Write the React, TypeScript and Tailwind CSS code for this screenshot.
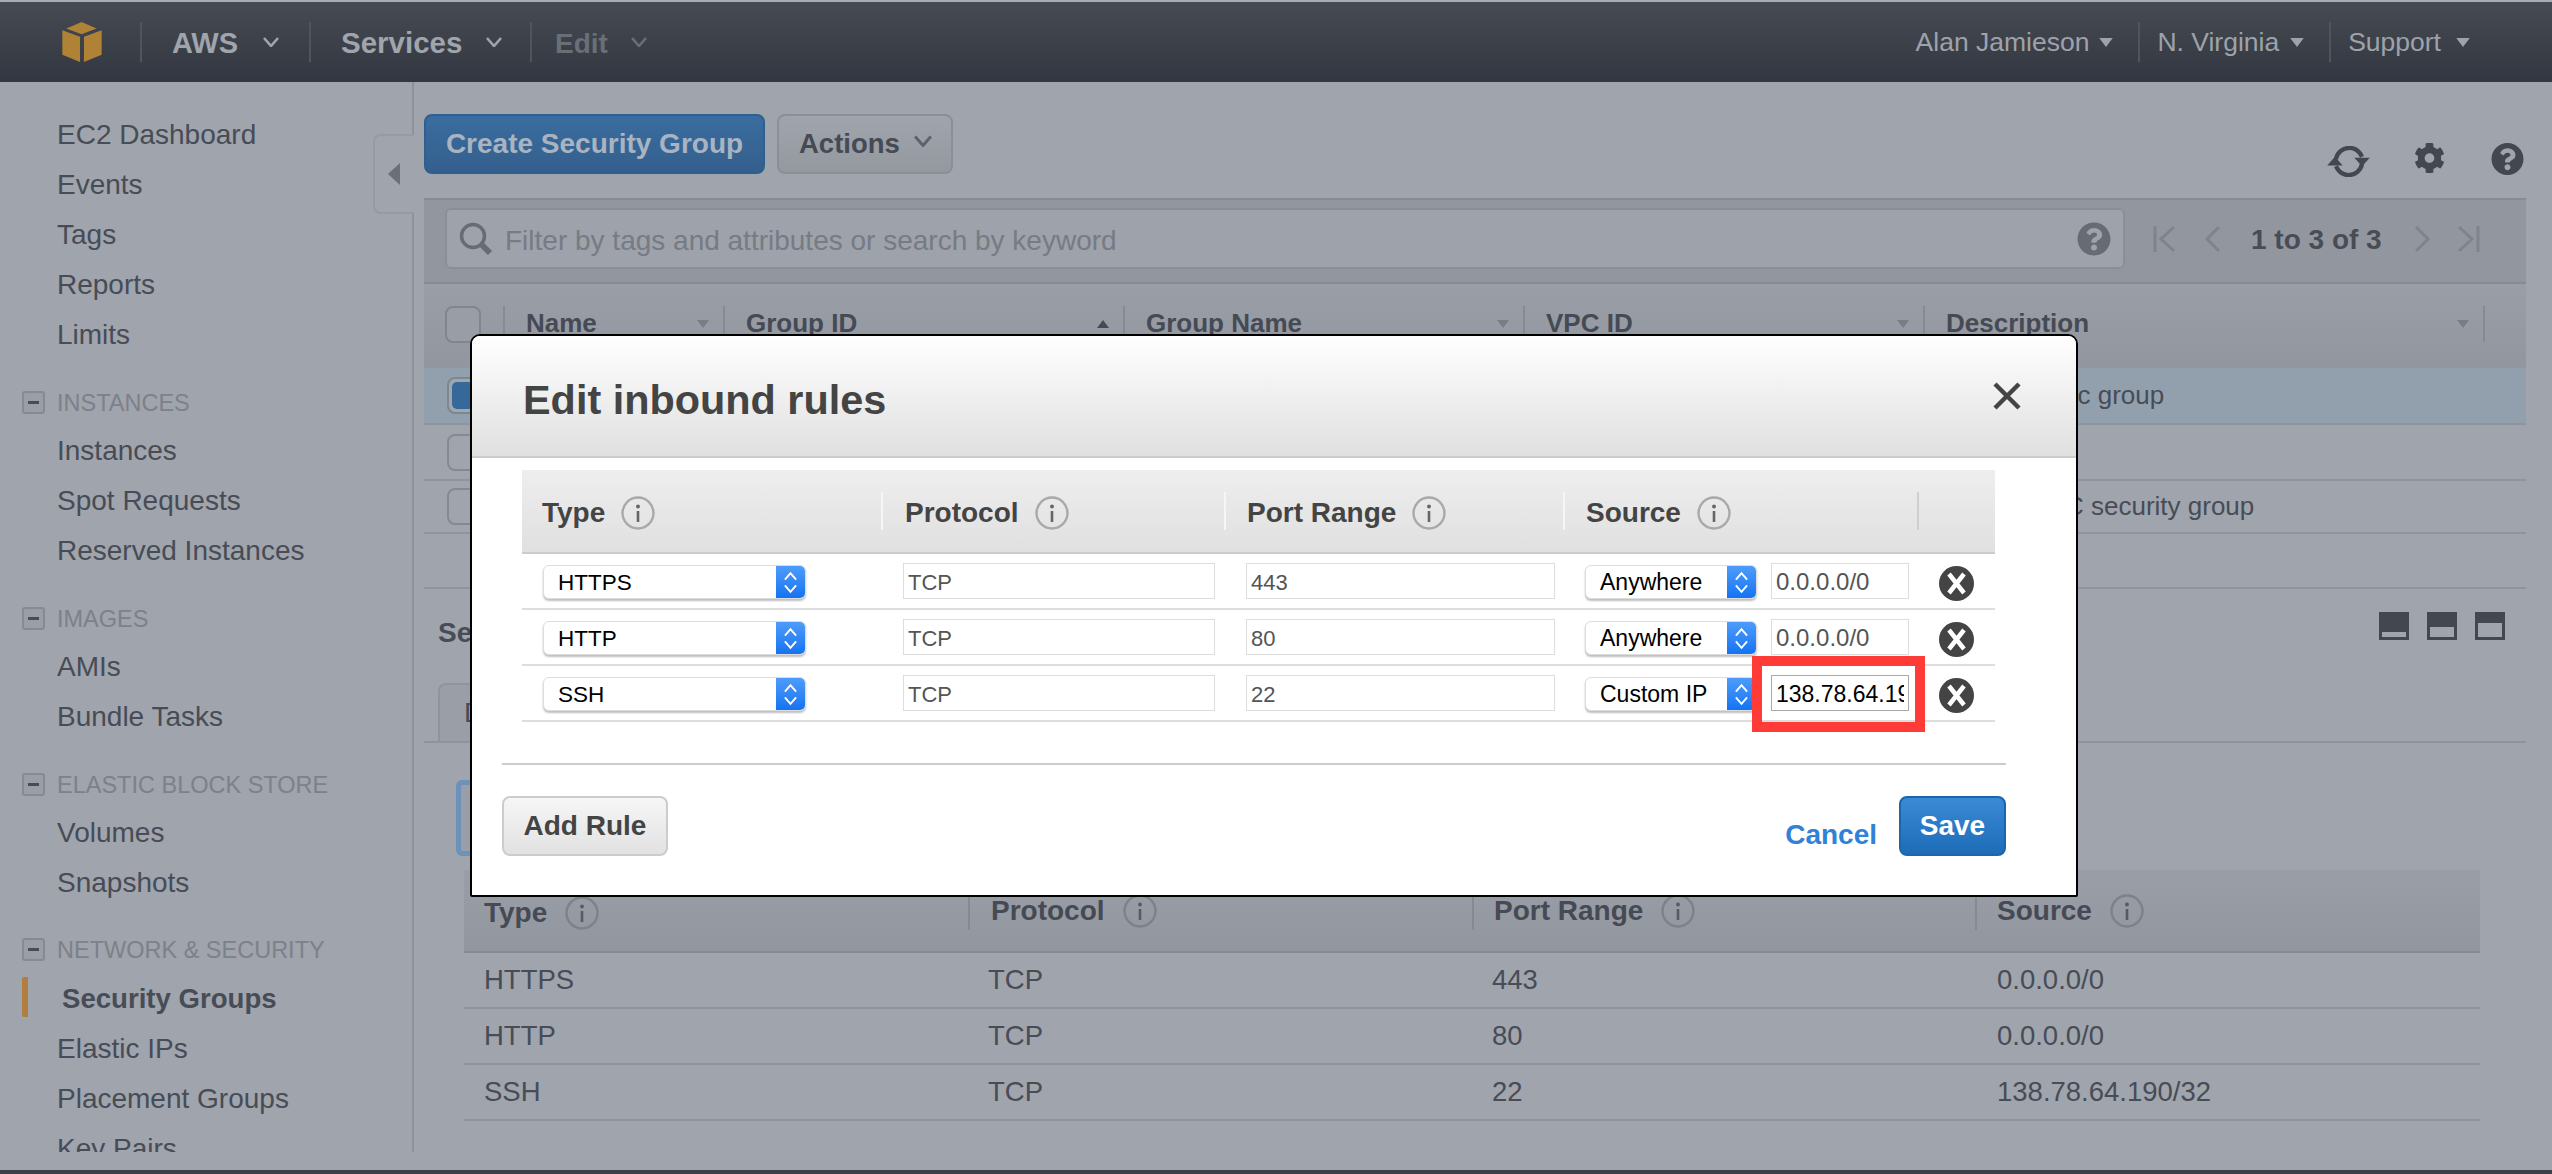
import { ReactNode } from 'react';
import { FaCog, FaQuestionCircle } from 'react-icons/fa';

function Chevron({ className }: { className: string }) {
    return (
        <svg viewBox="0 0 16 10" className={className} fill="none" stroke="currentColor" strokeWidth="2.6">
            <path d="M1 1l7 8 7-8" />
        </svg>
    );
}

function SmallCaret({ up, className }: { up?: boolean; className: string }) {
    return (
        <svg viewBox="0 0 12 8" className={className} fill="currentColor">
            <path d={up ? 'M6 0l6 8H0z' : 'M0 0h12L6 8z'} />
        </svg>
    );
}

function InfoIcon({ dim }: { dim?: boolean }) {
    return (
        <svg viewBox="0 0 34 34" className="w-[34px] h-[34px] shrink-0" fill="none">
            <circle cx="17" cy="17" r="15.5" stroke={dim ? '#7d828a' : '#a9a9a9'} strokeWidth="2.4" />
            <circle cx="17" cy="10.5" r="1.9" fill={dim ? '#555a63' : '#666666'} />
            <path d="M17 15v11" stroke={dim ? '#555a63' : '#666666'} strokeWidth="2.6" />
        </svg>
    );
}

function RemoveIcon() {
    return (
        <svg viewBox="0 0 35 35" className="w-[35px] h-[35px] mt-[3px]" fill="none">
            <circle cx="17.5" cy="17.5" r="17.5" fill="#444444" />
            <path d="M10 8l15 19M25 8L10 27" stroke="#ffffff" strokeWidth="4.5" />
        </svg>
    );
}

function Stepper() {
    return (
        <div className="w-[29px] h-full bg-gradient-to-b from-[#4d9cfa] to-[#1273f2] flex items-center justify-center shrink-0">
            <svg viewBox="0 0 16 26" className="w-[15px] h-[25px]" fill="none" stroke="#ffffff" strokeWidth="2">
                <path d="M2 10l6-7 6 7M2 16l6 7 6-7" />
            </svg>
        </div>
    );
}

function SelectBox({ value, className }: { value: string; className: string }) {
    return (
        <div className={`h-[34px] mt-[2px] bg-white border border-[#dddddd] rounded-[6px] shadow-[0_2px_2px_rgba(0,0,0,0.25)] flex items-center justify-between overflow-hidden text-black ${className}`}>
            <span className="pl-[14px] mt-[1px]">{value}</span>
            <Stepper />
        </div>
    );
}

function TextBox({ value, className }: { value: string; className: string }) {
    return (
        <div className={`h-[36px] bg-white border px-[4px] pt-[2px] flex items-center ${className}`}>
            <div className="overflow-hidden whitespace-nowrap w-full">{value}</div>
        </div>
    );
}

function SideItem({ children }: { children: ReactNode }) {
    return <div className="h-[50px] pl-[57px] pt-[3px] flex items-center text-[28px] text-[#474c56]">{children}</div>;
}

function SideGroup({ title, className }: { title: string; className: string }) {
    return (
        <div className={`h-[44px] pl-[22px] flex items-center ${className}`}>
            <div className="w-[23px] h-[23px] border-2 border-[#868b93] rounded-[3px] bg-[#9a9ea6] flex items-center justify-center mr-[12px]">
                <div className="w-[11px] h-[3px] bg-[#474c56]"></div>
            </div>
            <span className="text-[23.5px] text-[#7c818a] mt-[4px]">{title}</span>
        </div>
    );
}

function GridHead({ label, caret, className }: { label: string; caret?: 'up' | 'down'; className: string }) {
    return (
        <div className={`h-[36px] border-l-2 border-[#868b93] pl-[21px] pr-[14px] flex items-center justify-between ${className}`}>
            <span className="font-bold text-[26px] text-[#454a54] pb-[2px]">{label}</span>
            {caret && <SmallCaret up={caret === 'up'} className={`w-[12px] h-[8px] ${caret === 'up' ? 'text-[#454a54]' : 'text-[#787d86]'}`} />}
        </div>
    );
}

function RuleHead({ label, className }: { label: string; className: string }) {
    return (
        <div className={`h-[38px] pt-[3px] flex items-center ${className}`}>
            <span className="font-bold text-[28px] text-[#444444] mr-[16px]">{label}</span>
            <InfoIcon />
        </div>
    );
}

function RuleRow({ type, port, source, cidr }: { type: string; port: string; source: string; cidr: string }) {
    const custom = source === 'Custom IP';
    return (
        <div className="h-[56px] border-b-2 border-[#dddddd] pt-[9px] flex items-start">
            <div className="w-[359px] pl-[21px]">
                <SelectBox value={type} className="w-[263px] text-[22.5px]" />
            </div>
            <div className="w-[343px] pl-[22px]">
                <TextBox value="TCP" className="w-[312px] border-[#dddddd] text-[22px] text-[#555555]" />
            </div>
            <div className="w-[339px] pl-[22px]">
                <TextBox value={port} className="w-[309px] border-[#dddddd] text-[22px] text-[#555555]" />
            </div>
            <div className="w-[354px] pl-[22px] flex">
                <SelectBox value={source} className="w-[172px] mr-[14px] text-[23px]" />
                {custom ? (
                    <TextBox value={cidr} className="w-[138px] border-[#aaaaaa] text-[23px] text-black" />
                ) : (
                    <TextBox value={cidr} className="w-[138px] border-[#dddddd] text-[24px] text-[#555555]" />
                )}
            </div>
            <div className="w-[78px] pl-[22px]">
                <RemoveIcon />
            </div>
        </div>
    );
}

function DetailRow({ type, port, source }: { type: string; port: string; source: string }) {
    return (
        <div className="h-[56px] border-b-2 border-[#8f949c] flex items-center text-[27.5px] text-[#474c56]">
            <div className="w-[524px] pl-[20px]">{type}</div>
            <div className="w-[504px]">TCP</div>
            <div className="w-[505px]">{port}</div>
            <div>{source}</div>
        </div>
    );
}

const sideTop = ['EC2 Dashboard', 'Events', 'Tags', 'Reports', 'Limits'];

export default function App() {
    return (
        <div className="relative w-[2552px] h-[1174px] overflow-hidden bg-[#a0a4ac] font-['Liberation_Sans',Arial,sans-serif]">
            <div className="h-[2px] bg-[#a9abaf]"></div>

            {/* top bar */}
            <header className="h-[80px] bg-gradient-to-b from-[#464a52] to-[#333741] flex items-center">
                <div className="w-[140px] pl-[62px]">
                    <svg viewBox="0 0 120 122" className="w-[40px] h-[40px]" fill="#b08236">
                        <path d="M59 0L12 20l47 17 45-17z" />
                        <path d="M0 25l54 20v77L0 100z" />
                        <path d="M66 45l54-20v75l-54 22z" />
                    </svg>
                </div>
                <div className="h-[40px] w-[169px] border-l-2 border-[#50545c] pl-[30px] flex items-center">
                    <span className="font-bold text-[29px] text-[#a0a4ac] mt-[3px]">AWS</span>
                    <Chevron className="w-[16px] h-[10px] ml-[25px] text-[#a0a4ac]" />
                </div>
                <div className="h-[40px] w-[221px] border-l-2 border-[#50545c] pl-[30px] flex items-center">
                    <span className="font-bold text-[29.5px] text-[#a0a4ac] mt-[3px]">Services</span>
                    <Chevron className="w-[16px] h-[10px] ml-[24px] text-[#a0a4ac]" />
                </div>
                <div className="h-[40px] border-l-2 border-[#50545c] pl-[23px] flex items-center">
                    <span className="font-bold text-[28px] text-[#6a6e76] mt-[3px]">Edit</span>
                    <Chevron className="w-[16px] h-[10px] ml-[23px] text-[#6a6e76]" />
                </div>

                <div className="ml-auto flex items-center text-[26.5px] text-[#9ea2aa] pr-[82px]">
                    <span className="mt-[2px]">Alan Jamieson</span>
                    <SmallCaret className="w-[14px] h-[9px] ml-[10px] mr-[25px]" />
                    <div className="h-[40px] border-l-2 border-[#50545c] pl-[17px] flex items-center">
                        <span className="mt-[2px]">N. Virginia</span>
                        <SmallCaret className="w-[14px] h-[9px] ml-[11px] mr-[25px]" />
                    </div>
                    <div className="h-[40px] border-l-2 border-[#50545c] pl-[17px] flex items-center">
                        <span className="mt-[2px]">Support</span>
                        <SmallCaret className="w-[14px] h-[9px] ml-[15px]" />
                    </div>
                </div>
            </header>

            <div className="h-[1088px] flex items-start">
                {/* side nav */}
                <aside className="relative w-[414px] h-[1070px] shrink-0 border-r-2 border-[#8e939b]">
                    <div className="h-full overflow-hidden pt-[26px]">
                        {sideTop.map((item) => (
                            <SideItem key={item}>{item}</SideItem>
                        ))}
                        <SideGroup title="INSTANCES" className="mt-[22px]" />
                        <SideItem>Instances</SideItem>
                        <SideItem>Spot Requests</SideItem>
                        <SideItem>Reserved Instances</SideItem>
                        <SideGroup title="IMAGES" className="mt-[22px]" />
                        <SideItem>AMIs</SideItem>
                        <SideItem>Bundle Tasks</SideItem>
                        <SideGroup title="ELASTIC BLOCK STORE" className="mt-[22px]" />
                        <SideItem>Volumes</SideItem>
                        <SideItem>Snapshots</SideItem>
                        <SideGroup title="NETWORK & SECURITY" className="mt-[21px]" />
                        <div className="h-[50px] mt-[1px] flex items-center">
                            <div className="ml-[22px] w-[6px] h-[40px] bg-[#b07f3f] rounded-l-[2px]"></div>
                            <span className="ml-[34px] mt-[3px] font-bold text-[27.6px] text-[#474c56]">Security Groups</span>
                        </div>
                        <SideItem>Elastic IPs</SideItem>
                        <SideItem>Placement Groups</SideItem>
                        <SideItem>Key Pairs</SideItem>
                    </div>
                    <div className="absolute left-[373px] top-[52px] w-[41px] h-[80px] bg-[#a0a4ac] border-2 border-r-0 border-[#969aa2] rounded-l-[8px] flex items-center pl-[13px]">
                        <svg viewBox="0 0 12 22" className="w-[12px] h-[22px]" fill="#6a6f78">
                            <path d="M12 0v22L0 11z" />
                        </svg>
                    </div>
                </aside>

                {/* main column */}
                <main className="ml-[10px] w-[2102px] pt-[32px]">
                    <div className="h-[60px] flex">
                        <button className="w-[341px] h-[60px] rounded-[8px] border-2 border-[#2f5f8e] bg-gradient-to-b from-[#3a6d9f] to-[#345f8d] font-bold text-[28px] text-[#a9b4c2]">
                            Create Security Group
                        </button>
                        <button className="ml-[12px] w-[176px] h-[60px] rounded-[8px] border-2 border-[#8b9098] bg-gradient-to-b from-[#a0a4ac] to-[#94989f] flex items-center pl-[20px] font-bold text-[27.5px] text-[#454a54]">
                            Actions
                            <Chevron className="w-[18px] h-[12px] ml-[14px] mb-[6px] text-[#5d626b]" />
                        </button>
                        <div className="ml-auto flex items-start pt-[32px] text-[#434750]">
                            <svg viewBox="0 0 44 32" className="w-[43px] h-[31px]" fill="none">
                                <path d="M9 14c1-7 7-12 14-12 6 0 10 3 13 9" stroke="currentColor" strokeWidth="4.5" />
                                <path d="M36 18c-1 7-7 12-14 12-6 0-10-3-13-9" stroke="currentColor" strokeWidth="4.5" />
                                <path d="M28 12h16l-8 9zM0 20h16L8 11z" fill="currentColor" />
                            </svg>
                            <FaCog className="w-[31px] h-[32px] ml-[44px] -mt-[4px]" />
                            <FaQuestionCircle className="w-[33px] h-[34px] ml-[46px] mr-[2px] -mt-[4px]" />
                        </div>
                    </div>

                    {/* filter */}
                    <div className="mt-[24px] h-[86px] border-t-2 border-b-2 border-[#878c94] bg-[#92979f] pl-[21px] pt-[8px] flex">
                        <div className="w-[1680px] h-[61px] rounded-[6px] border-2 border-[#8a8f97] bg-[#9ea2aa] flex items-center pl-[12px] pr-[12px]">
                            <svg viewBox="0 0 34 34" className="w-[34px] h-[34px] shrink-0" fill="none" stroke="#666b74">
                                <circle cx="14" cy="14" r="11.5" strokeWidth="3.5" />
                                <path d="M22 22l9 9" strokeWidth="6" />
                            </svg>
                            <span className="ml-[12px] mt-[4px] text-[28px] text-[#767b84]">Filter by tags and attributes or search by keyword</span>
                            <FaQuestionCircle className="ml-auto w-[34px] h-[34px] text-[#666b74]" />
                        </div>
                        <div className="ml-[28px] flex items-center h-[61px] text-[#7f848c]">
                            <svg viewBox="0 0 22 28" className="w-[22px] h-[28px]" fill="none" stroke="currentColor" strokeWidth="3">
                                <path d="M2 1v26M21 2L8 14l13 12" />
                            </svg>
                            <svg viewBox="0 0 16 28" className="w-[16px] h-[28px] ml-[29px]" fill="none" stroke="currentColor" strokeWidth="3">
                                <path d="M15 2L3 14l12 12" />
                            </svg>
                            <span className="ml-[31px] mt-[2px] font-bold text-[28px] text-[#474c56]">1 to 3 of 3</span>
                            <svg viewBox="0 0 16 28" className="w-[16px] h-[28px] ml-[33px]" fill="none" stroke="currentColor" strokeWidth="3">
                                <path d="M1 2l12 12L1 26" />
                            </svg>
                            <svg viewBox="0 0 22 28" className="w-[22px] h-[28px] ml-[27px]" fill="none" stroke="currentColor" strokeWidth="3">
                                <path d="M20 1v26M1 2l13 12L1 26" />
                            </svg>
                        </div>
                    </div>

                    {/* groups grid */}
                    <div className="h-[84px] bg-gradient-to-b from-[#9a9ea6] to-[#92969e] pt-[22px] flex items-start">
                        <div className="w-[79px] pl-[21px]">
                            <div className="w-[36px] h-[37px] rounded-[8px] border-2 border-[#81868e] bg-[#999da5]"></div>
                        </div>
                        <GridHead label="Name" caret="down" className="w-[220px]" />
                        <GridHead label="Group ID" caret="up" className="w-[400px]" />
                        <GridHead label="Group Name" caret="down" className="w-[400px]" />
                        <GridHead label="VPC ID" caret="down" className="w-[400px]" />
                        <GridHead label="Description" caret="down" className="w-[560px]" />
                        <div className="h-[36px] border-l-2 border-[#868b93]"></div>
                    </div>
                    <div className="h-[55px] bg-[#92a0ae] flex items-center pl-[23px]">
                        <div className="w-[36px] h-[37px] rounded-[8px] border-2 border-[#7d8791] bg-[#9ea6af] p-[3px]">
                            <div className="w-full h-full rounded-[5px] bg-[#36699a]"></div>
                        </div>
                        <div className="ml-[1462px] text-[26px] text-[#474c56] whitespace-nowrap">HTTP Public group</div>
                    </div>
                    <div className="h-[56px] border-t-2 border-[#8f949c] flex items-center pl-[23px]">
                        <div className="w-[36px] h-[37px] rounded-[8px] border-2 border-[#858a92] bg-[#a0a4ac]"></div>
                    </div>
                    <div className="h-[55px] border-t-2 border-b-2 border-[#8f949c] flex items-center pl-[23px]">
                        <div className="w-[36px] h-[37px] rounded-[8px] border-2 border-[#858a92] bg-[#a0a4ac]"></div>
                        <div className="ml-[1462px] text-[26px] text-[#474c56] whitespace-nowrap">default VPC security group</div>
                    </div>

                    {/* details */}
                    <div className="mt-[53px] h-[96px] border-t-2 border-[#8f949c] flex items-start pl-[14px] pt-[23px]">
                        <span className="font-bold text-[28px] text-[#474c56]">Security Group</span>
                        <div className="ml-auto mr-[21px] flex gap-[18px]">
                            <div className="w-[30px] h-[28px] bg-[#434750] flex items-end justify-center pb-[3px]">
                                <div className="w-[24px] h-[5px] bg-[#a0a4ac]"></div>
                            </div>
                            <div className="w-[30px] h-[28px] bg-[#434750] flex items-end justify-center pb-[3px]">
                                <div className="w-[24px] h-[10px] bg-[#a0a4ac]"></div>
                            </div>
                            <div className="w-[30px] h-[28px] bg-[#434750] flex items-end justify-center pb-[3px]">
                                <div className="w-[24px] h-[14px] bg-[#a0a4ac]"></div>
                            </div>
                        </div>
                    </div>
                    <div className="h-[60px] border-b-2 border-[#8f949c] pl-[14px]">
                        <div className="w-[100px] h-[58px] rounded-t-[8px] border-2 border-b-0 border-[#8f949c] bg-[#9a9ea6] pl-[24px] flex items-center text-[28px] text-[#474c56]">
                            Description
                        </div>
                    </div>
                    <div className="ml-[32px] mt-[37px] w-[80px] h-[76px] rounded-[6px] border-[5px] border-[#6c91bb] bg-[#9a9ea6]"></div>
                    <div className="ml-[40px] w-[2016px] mt-[14px]">
                        <div className="h-[83px] border-b-2 border-[#858a92] bg-gradient-to-b from-[#9a9ea6] to-[#92969e] flex items-start pt-[22px]">
                            <div className="w-[504px] pl-[20px] flex items-center">
                                <span className="font-bold text-[28px] text-[#454a54] mr-[18px]">Type</span>
                                <InfoIcon dim />
                            </div>
                            <div className="w-[504px] h-[38px] border-l-2 border-[#858a92] pl-[21px] flex items-center">
                                <span className="font-bold text-[28px] text-[#454a54] mr-[18px]">Protocol</span>
                                <InfoIcon dim />
                            </div>
                            <div className="w-[503px] h-[38px] border-l-2 border-[#858a92] pl-[20px] flex items-center">
                                <span className="font-bold text-[28px] text-[#454a54] mr-[18px]">Port Range</span>
                                <InfoIcon dim />
                            </div>
                            <div className="h-[38px] border-l-2 border-[#858a92] pl-[20px] flex items-center">
                                <span className="font-bold text-[28px] text-[#454a54] mr-[18px]">Source</span>
                                <InfoIcon dim />
                            </div>
                        </div>
                        <DetailRow type="HTTPS" port="443" source="0.0.0.0/0" />
                        <DetailRow type="HTTP" port="80" source="0.0.0.0/0" />
                        <DetailRow type="SSH" port="22" source="138.78.64.190/32" />
                    </div>
                </main>
            </div>
            <div className="h-[4px] bg-[#3c4049]"></div>

            {/* edit inbound rules dialog */}
            <div className="absolute left-[470px] top-[334px] w-[1608px] h-[563px] bg-white border-2 border-black rounded-t-[10px] rounded-b-[2px] overflow-hidden">
                <div className="h-[122px] border-b-2 border-[#cccccc] bg-gradient-to-b from-white to-[#e0e0e0] pl-[51px] flex items-center justify-between">
                    <h2 className="font-bold text-[41.4px] text-[#444444] pt-[8px]">Edit inbound rules</h2>
                    <svg viewBox="0 0 28 28" className="w-[28px] h-[28px] mr-[55px]" fill="none" stroke="#444444" strokeWidth="4.5">
                        <path d="M2 2l24 24M26 2L2 26" />
                    </svg>
                </div>
                <div className="mx-[50px] mt-[12px] w-[1473px]">
                    <div className="h-[84px] border-b-2 border-[#cccccc] bg-gradient-to-b from-[#eeeeee] to-[#e0e0e0] flex items-start pt-[22px]">
                        <RuleHead label="Type" className="w-[359px] pl-[20px]" />
                        <RuleHead label="Protocol" className="w-[343px] border-l-2 border-[#f6f6f6] pl-[22px]" />
                        <RuleHead label="Port Range" className="w-[339px] border-l-2 border-[#f6f6f6] pl-[21px]" />
                        <RuleHead label="Source" className="w-[354px] border-l-2 border-[#f6f6f6] pl-[21px]" />
                        <div className="h-[38px] border-l-2 border-[#cfcfcf]"></div>
                    </div>
                    <RuleRow type="HTTPS" port="443" source="Anywhere" cidr="0.0.0.0/0" />
                    <RuleRow type="HTTP" port="80" source="Anywhere" cidr="0.0.0.0/0" />
                    <RuleRow type="SSH" port="22" source="Custom IP" cidr="138.78.64.190/32" />
                </div>
                <div className="ml-[30px] mr-[70px] mt-[41px] h-[2px] bg-[#cccccc]"></div>
                <div className="ml-[30px] mr-[70px] mt-[31px] flex items-start">
                    <button className="w-[166px] h-[60px] rounded-[8px] border-2 border-[#cccccc] bg-gradient-to-b from-[#f6f6f6] to-[#e2e2e2] font-bold text-[28px] text-[#444444]">
                        Add Rule
                    </button>
                    <a className="ml-auto mt-[18px] font-bold text-[28px] text-[#2f82d8]">Cancel</a>
                    <button className="ml-[22px] w-[107px] h-[60px] rounded-[8px] border-2 border-[#1d66ad] bg-gradient-to-b from-[#3a8ad6] to-[#1c6cb8] font-bold text-[28px] text-white">
                        Save
                    </button>
                </div>
            </div>

            {/* annotation */}
            <div className="absolute left-[1752px] top-[656px] w-[173px] h-[76px] border-[10px] border-[#ff3b38]"></div>
        </div>
    );
}
